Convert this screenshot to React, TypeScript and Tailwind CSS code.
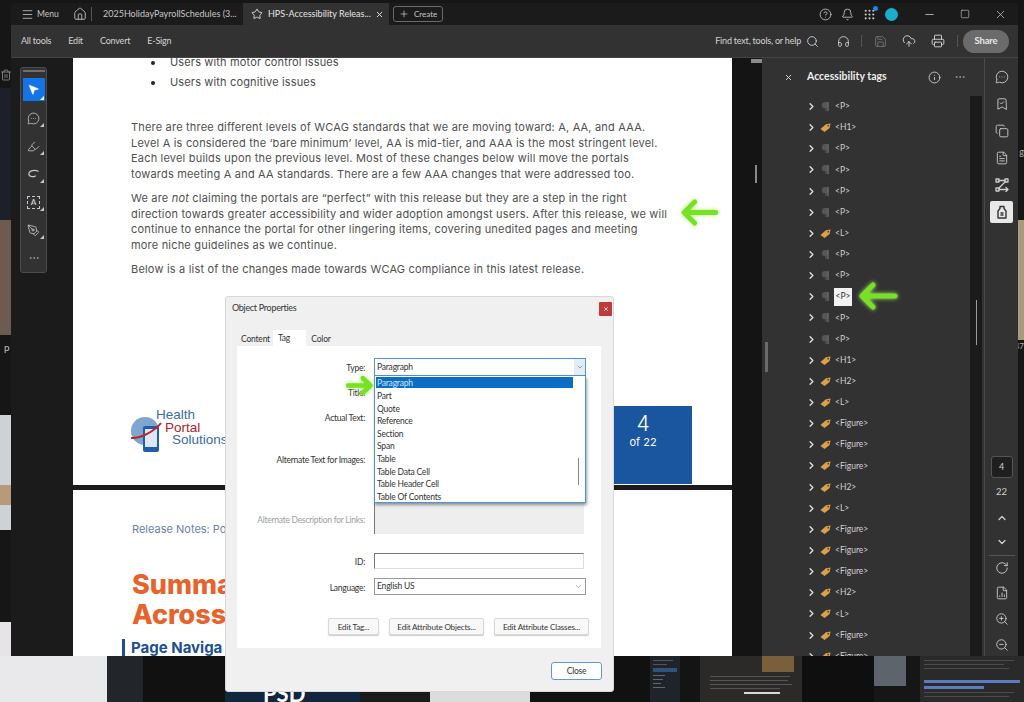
import {
  Bell,
  BookmarkCheck,
  ChevronDown,
  ChevronRight,
  ChevronUp,
  CircleHelp,
  CloudUpload,
  Copy,
  Ellipsis,
  FileChartColumn,
  FileText,
  Grip,
  Headphones,
  Highlighter,
  Home,
  Info,
  Menu,
  MessageCircleMore,
  Minus,
  MousePointer2,
  PenTool,
  Plus,
  Printer,
  RotateCw,
  Save,
  Search,
  Square,
  Star,
  Trash2,
  X,
  ZoomIn,
  ZoomOut,
} from "lucide-react";

const tags = [
  "P", "H1", "P", "P", "P", "P", "L", "P", "P", "P", "P", "P", "H1", "H2",
  "L", "Figure", "Figure", "Figure", "H2", "L", "Figure", "Figure", "Figure",
  "H2", "L", "Figure", "Figure",
];

const dropdownItems = [
  "Part", "Quote", "Reference", "Section", "Span", "Table", "Table Data Cell",
  "Table Header Cell", "Table Of Contents",
];

function GreenArrow({ className, flip, thick }: { className: string; flip?: boolean; thick?: boolean }) {
  return (
    <svg
      viewBox="0 0 40 28"
      fill="none"
      stroke="#78e025"
      strokeWidth={thick ? 7 : 5}
      strokeLinecap="round"
      strokeLinejoin="round"
      className={`drop-shadow-[0_0_2px_#a6ee6a] ${className}`}
      style={flip ? { transform: "scaleX(-1)" } : undefined}
    >
      <path d="M37 14H5M15 3 4 14l11 11" />
    </svg>
  );
}

function TagIcon() {
  return (
    <svg viewBox="0 0 12 12" className="h-[11px] w-[11px] shrink-0">
      <path d="M.5 7.500 6.500 2.500 11.500 1.500 10.500 6.500 5 11z" fill="#d9a24a" />
      <circle cx="9" cy="4" r="1" fill="#5b4520" />
    </svg>
  );
}

function ParaIcon() {
  return (
    <svg viewBox="0 0 12 12" className="h-[11px] w-[11px] shrink-0">
      <circle cx="5.500" cy="4.500" r="3.500" fill="#555" />
      <rect x="8" y="1" width="1.500" height="10" fill="#6a6a6a" />
      <rect x="6" y="1" width="1.200" height="10" fill="#5c5c5c" />
    </svg>
  );
}

function ToolBtn({ children }: { children: React.ReactNode }) {
  return (
    <div className="relative flex h-[28px] w-[22px] items-center justify-center text-[#c8c8c8]">
      {children}
      <span className="absolute right-[1px] bottom-[5px] h-0 w-0 border-b-[4px] border-l-[4px] border-b-[#c8c8c8] border-l-transparent" />
    </div>
  );
}

function FormRow({ label, muted, height, children }: { label: string; muted?: boolean; height: string; children?: React.ReactNode }) {
  return (
    <div className={`flex ${height}`}>
      <div className={`w-[128px] shrink-0 pt-[4px] text-right text-[8.500px] leading-[12px] tracking-[-0.27px] whitespace-nowrap ${muted ? "text-[#a0a0a0]" : "text-[#333]"}`}>{label}</div>
      <div className="ml-[9px] flex-1">{children}</div>
    </div>
  );
}

function DialogBtn({ label, width }: { label: string; width: string }) {
  return (
    <button className={`h-[17px] ${width} rounded-[2px] border border-[#d8d8d8] bg-[#f8f8f8] text-[8px] tracking-[-0.15px] text-[#333] shadow-[0_1px_1px_#ccc]`}>
      {label}
    </button>
  );
}

export default function App() {
  return (
    <div className="relative h-[702px] w-[1024px] overflow-hidden bg-[#161616] font-['Lato',sans-serif]">
      {/* desktop behind the window */}
      <Trash2 className="absolute top-[68px] left-0 h-[14px] w-[12px] text-[#9a9a9a]" strokeWidth={1.5} />
      <div className="absolute top-[88px] left-0 h-[132px] w-[11px] bg-[#1d2029]" />
      <div className="absolute top-[220px] left-0 h-[115px] w-[11px] bg-[#6d5a50]" />
      <span className="absolute top-[340px] left-[4px] text-[10px] text-[#c0c0c0]">p</span>
      <div className="absolute top-[415px] left-0 h-[115px] w-[11px] bg-[#cdd2d6]" />
      <div className="absolute top-[485px] left-0 h-[20px] w-[11px] bg-[#b89a7a]" />
      <div className="absolute top-[622px] left-0 h-[80px] w-[11px] bg-[#e6e4e6]" />
      <div className="absolute top-[220px] right-0 h-[120px] w-[6px] bg-[#a89a7c]" />
      <span className="absolute top-[145px] right-0 text-[9px] text-[#b0b0b0]">g</span>
      <span className="absolute top-[340px] right-0 text-[8px] text-[#b0b0b0]">47</span>
      <div className="absolute top-[656px] left-0 flex h-[46px] w-[1024px] overflow-hidden">
        <div className="w-[107px] bg-[#e9e8ea]" />
        <div className="w-[36px] bg-[#22262b]" />
        <div className="w-[82px] bg-[#111]" />
        <div className="h-full w-[135px] overflow-hidden bg-[#12263f] pt-[27px] pl-[38px] text-[22px] leading-[22px] font-bold text-white">PSD</div>
        <div className="w-[70px] bg-[#1a1a1a]" />
        <div className="w-[100px] bg-[#dcdcdc]" />
        <div className="w-[120px] bg-[#111]" />
        <div className="flex w-[30px] flex-col gap-[3px] bg-[#1f242a] px-[3px] pt-[4px] blur-[0.6px]">
          <div className="h-[1px] w-[20px] bg-[#555]" />
          <div className="h-[1px] w-[14px] bg-[#555]" />
          <div className="h-[4px] w-[24px] bg-[#34507c]" />
          <div className="h-[1px] w-[12px] bg-[#666]" />
          <div className="h-[1px] w-[10px] bg-[#666]" />
          <div className="h-[1px] w-[8px] bg-[#666]" />
          <div className="h-[1px] w-[12px] bg-[#666]" />
        </div>
        <div className="w-[20px] bg-[#141414]" />
        <div className="relative flex w-[102px] flex-col gap-[3px] bg-[#2b2a29] px-[10px] pt-[20px] blur-[0.6px]">
          <div className="absolute top-0 right-[8px] h-[16px] w-[32px] bg-[#7a5f3c]" />
          <div className="h-[1px] w-[80px] bg-[#555]" />
          <div className="h-[1px] w-[78px] bg-[#555]" />
          <div className="h-[1px] w-[82px] bg-[#555]" />
          <div className="h-[1px] w-[70px] bg-[#555]" />
          <div className="ml-[34px] h-[2px] w-[36px] bg-[#d8d8d8]" />
        </div>
        <div className="w-[72px] bg-[#0f0f0f]" />
        <div className="w-[46px] bg-[#161616]">
          <div className="h-[30px] w-[32px] bg-[#5d646c]" />
        </div>
        <div className="flex w-[104px] flex-col gap-[3px] bg-[#2a2a2b] pt-[4px] pl-[4px] blur-[0.6px]">
          <div className="h-[1px] w-[90px] bg-[#4c4c4c]" />
          <div className="h-[1px] w-[80px] bg-[#4c4c4c]" />
          <div className="h-[1px] w-[85px] bg-[#4c4c4c]" />
          <div className="mt-[8px] h-[3px] w-[96px] bg-[#5d7cc0]" />
          <div className="h-[3px] w-[60px] bg-[#5d7cc0]" />
          <div className="h-[1px] w-[90px] bg-[#4c4c4c]" />
          <div className="h-[1px] w-[85px] bg-[#4c4c4c]" />
        </div>
      </div>

      {/* acrobat window */}
      <div className="absolute top-[3px] left-[11px] flex h-[653px] w-[1007px] flex-col overflow-hidden rounded-t-[4px] bg-[#1b1b1b]">
        <div className="flex h-[22px] shrink-0 items-center pr-[11px] text-[#c6c6c6]">
          <Menu className="ml-[10px] h-[13px] w-[13px]" strokeWidth={1.5} />
          <span className="ml-[3px] w-[26px] text-[8.500px]">Menu</span>
          <Home className="ml-[10px] h-[14px] w-[14px]" strokeWidth={1.5} />
          <div className="ml-[4px] h-[14px] w-px bg-[#555]" />
          <div className="w-[151px] pl-[11px] text-[9px] whitespace-nowrap">2025HolidayPayrollSchedules (3...</div>
          <div className="flex h-full w-[146px] items-center bg-[#323232] pl-[8px] text-[#e4e4e4]">
            <Star className="h-[12px] w-[12px]" strokeWidth={1.8} />
            <span className="ml-[5px] w-[100px] text-[9px] whitespace-nowrap">HPS-Accessibility Releas...</span>
            <X className="ml-[7px] h-[9px] w-[9px]" strokeWidth={2.5} />
          </div>
          <div className="ml-[4px] flex h-[16px] w-[50px] items-center rounded-[3px] border border-[#6a6a6a] pl-[5px]">
            <Plus className="h-[10px] w-[10px]" strokeWidth={1.8} />
            <span className="ml-[5px] text-[8px]">Create</span>
          </div>
          <div className="ml-auto flex items-center gap-[9px]">
            <CircleHelp className="h-[13px] w-[13px]" strokeWidth={1.6} />
            <Bell className="h-[13px] w-[13px]" strokeWidth={1.6} />
            <div className="relative">
              <Grip className="h-[13px] w-[13px]" strokeWidth={2} />
              <span className="absolute -top-[2px] -right-[2px] h-[5px] w-[5px] rounded-full bg-[#2680eb]" />
            </div>
            <div className="h-[13px] w-[13px] rounded-full bg-[#19aecb]" />
          </div>
          <Minus className="ml-[25px] h-[13px] w-[13px]" strokeWidth={1.5} />
          <Square className="ml-[24px] h-[10px] w-[10px]" strokeWidth={1.5} />
          <X className="ml-[24px] h-[13px] w-[13px]" strokeWidth={1.4} />
        </div>

        <div className="flex h-[33px] shrink-0 items-center border-b border-[#444] bg-[#323232] pr-[9px] text-[9px] tracking-[-0.2px] text-[#d4d4d4]">
          <div className="ml-[10px] flex gap-[17px] whitespace-nowrap">
            <span>All tools</span>
            <span>Edit</span>
            <span>Convert</span>
            <span>E-Sign</span>
          </div>
          <span className="ml-auto whitespace-nowrap">Find text, tools, or help</span>
          <Search className="ml-[5px] h-[13px] w-[13px]" strokeWidth={1.6} />
          <Headphones className="ml-[18px] h-[13px] w-[13px]" strokeWidth={1.6} />
          <div className="ml-[11px] h-[12px] w-px bg-[#555]" />
          <Save className="ml-[12px] h-[13px] w-[13px] text-[#777]" strokeWidth={1.6} />
          <CloudUpload className="ml-[15px] h-[14px] w-[14px]" strokeWidth={1.6} />
          <Printer className="ml-[15px] h-[14px] w-[14px]" strokeWidth={1.6} />
          <div className="ml-[12px] h-[12px] w-px bg-[#555]" />
          <div className="ml-[5px] flex h-[23px] w-[46px] items-center justify-center rounded-full bg-[#6b6b6b] text-[9.500px] font-bold text-[#e8e8e8]">Share</div>
        </div>

        <div className="flex min-h-0 flex-1">
          <div className="w-[62px] shrink-0 pt-[9px] pl-[9px]">
            <div className="flex h-[206px] w-[27px] flex-col items-center rounded-[3px] border border-[#4c4c4c] bg-[#323232] pt-[2px]">
              <div className="h-[2px] w-[22px] bg-[#6e6e6e]" />
              <div className="relative mt-[6px] mb-[3px] flex h-[23px] w-[22px] items-center justify-center bg-[#1473e6]">
                <MousePointer2 className="h-[13px] w-[13px] fill-white text-white" strokeWidth={1} />
                <span className="absolute right-[1px] bottom-[1px] h-0 w-0 border-b-[4px] border-l-[4px] border-b-white border-l-transparent" />
              </div>
              <ToolBtn><MessageCircleMore className="h-[13px] w-[13px]" strokeWidth={1.5} /></ToolBtn>
              <ToolBtn><Highlighter className="h-[13px] w-[13px]" strokeWidth={1.5} /></ToolBtn>
              <ToolBtn>
                <svg viewBox="0 0 14 14" fill="none" stroke="currentColor" strokeWidth="1.3" strokeLinecap="round" className="h-[13px] w-[13px]">
                  <path d="M12 3.500C9 1.500 2 2.500 2 6.500c0 3 5 3.500 7 2" />
                </svg>
              </ToolBtn>
              <ToolBtn>
                <div className="flex h-[13px] w-[13px] items-center justify-center border border-dashed border-[#c8c8c8] text-[8px] leading-none font-bold">A</div>
              </ToolBtn>
              <ToolBtn><PenTool className="h-[13px] w-[13px]" strokeWidth={1.5} /></ToolBtn>
              <Ellipsis className="mt-[8px] h-[12px] w-[12px] text-[#a8a8a8]" strokeWidth={1.5} />
            </div>
          </div>

          {/* document */}
          <div className="flex w-[659px] shrink-0 flex-col overflow-hidden bg-white font-['Inter',sans-serif]">
            <div className="flex h-[427px] shrink-0 flex-col">
              <ul className="ml-[78px] flex flex-col gap-[5px] text-[11px] leading-[15px] tracking-[0.15px] text-[#4a4a4a]">
                <li className="-mt-[3px] flex items-center">
                  <span className="h-[4px] w-[4px] rounded-full bg-[#222]" />
                  <span className="ml-[15px]">Users with motor control issues</span>
                </li>
                <li className="flex items-center">
                  <span className="h-[4px] w-[4px] rounded-full bg-[#222]" />
                  <span className="ml-[15px]">Users with cognitive issues</span>
                </li>
              </ul>
              <div className="mt-[30px] ml-[58px] flex flex-col gap-[8px] text-[11px] leading-[15.700px] tracking-[0.19px] whitespace-nowrap text-[#505050]">
                <p>
                  There are three different levels of WCAG standards that we are moving toward: A, AA, and AAA.<br />
                  Level A is considered the ‘bare minimum’ level, AA is mid-tier, and AAA is the most stringent level.<br />
                  Each level builds upon the previous level. Most of these changes below will move the portals<br />
                  towards meeting A and AA standards. There are a few AAA changes that were addressed too.
                </p>
                <p>
                  We are <em>not</em> claiming the portals are “perfect” with this release but they are a step in the right<br />
                  direction towards greater accessibility and wider adoption amongst users. After this release, we will<br />
                  continue to enhance the portal for other lingering items, covering unedited pages and meeting<br />
                  more niche guidelines as we continue.
                </p>
                <p>Below is a list of the changes made towards WCAG compliance in this latest release.</p>
              </div>
              <div className="mt-auto flex items-end justify-between pr-[40px] pl-[57px]">
                <div className="mb-[32px] flex items-start">
                  <svg viewBox="0 0 32 36" className="mt-[8px] h-[36px] w-[32px] shrink-0">
                    <circle cx="15" cy="14" r="14" fill="#7ea6cf" />
                    <rect x="13" y="9" width="16" height="26" rx="2" fill="#1f5ea8" />
                    <rect x="15" y="12" width="12" height="18" fill="#dfe8f2" />
                    <path d="M1 21C10 22 25 14 31 6" stroke="#c0202a" strokeWidth="2" fill="none" />
                  </svg>
                  <div className="-ml-[6px] w-[70px] font-['Liberation_Sans',sans-serif] text-[13.500px] leading-[12.500px] whitespace-nowrap">
                    <div className="text-[#3a6ea5]">Health</div>
                    <div className="pl-[9px] text-[#b3202a]">Portal</div>
                    <div className="pl-[16px] text-[#3a6ea5]">Solutions</div>
                  </div>
                </div>
                <div className="mb-px flex h-[78px] w-[98px] flex-col items-center bg-[#1a56a0] pt-[6px] text-white">
                  <span className="text-[21px] leading-[24px] font-light">4</span>
                  <span className="text-[11px] leading-[13px]">of 22</span>
                </div>
              </div>
            </div>
            <div className="h-[5px] shrink-0 bg-[#1b1b1b]" />
            <div className="flex min-h-0 flex-1 flex-col pl-[59px]">
              <span className="mt-[32px] text-[11px] leading-[14px] text-[#6d7fa8]">Release Notes: Po</span>
              <h1 className="mt-[34px] text-[27px] leading-[30px] font-extrabold text-[#e8622c]">
                Summa<br />Across
              </h1>
              <div className="mt-[1px] -ml-[2px] h-[2px] w-[546px] bg-[#2a62aa]" />
              <div className="mt-[8px] -ml-[10px] flex h-[18px] items-center border-l-[3px] border-[#1d4f91] pl-[6px] text-[15px] font-bold text-[#1d4f91]">Page Naviga</div>
            </div>
          </div>

          <div className="relative w-[30px] shrink-0 bg-[#141414]">
            <div className="absolute top-px right-0 h-[4px] w-[11px] bg-[#8a8a8a]" />
            <div className="absolute top-[107px] right-[5px] h-[18px] w-[2px] bg-[#8a8a8a]" />
          </div>

          {/* tags panel */}
          <div className="relative flex w-[222px] shrink-0 flex-col bg-[#323232] text-[#d6d6d6]">
            <div className="absolute top-[284px] left-[3px] h-[30px] w-[3px] bg-[#6a6a6a]" />
            <div className="flex h-[38px] shrink-0 items-center">
              <X className="ml-[22px] h-[9px] w-[9px]" strokeWidth={2.5} />
              <span className="ml-[14px] w-[80px] text-[10.500px] font-bold whitespace-nowrap text-[#ececec]">Accessibility tags</span>
              <Info className="ml-[41px] h-[13px] w-[13px]" strokeWidth={1.6} />
              <Ellipsis className="ml-[13px] h-[12px] w-[12px] text-[#a8a8a8]" strokeWidth={1.5} />
            </div>
            <div className="flex min-h-0 flex-1">
              <div className="w-[208px] shrink-0 overflow-hidden pl-[44px]">
                {tags.map((tag, i) => (
                  <div key={i} className="flex h-[21.150px] items-center">
                    <ChevronRight className="h-[11px] w-[11px] shrink-0 text-[#dcdcdc]" strokeWidth={3} />
                    <div className="ml-[3px]">{tag === "P" ? <ParaIcon /> : <TagIcon />}</div>
                    {i === 9 ? (
                      <span className="ml-[3px] flex h-[18px] w-[18px] items-center justify-center bg-[#f2f2f2] text-[8.500px] text-[#333]">&lt;P&gt;</span>
                    ) : (
                      <span className="ml-[4px] text-[8.500px] text-[#d0d0d0]">&lt;{tag}&gt;</span>
                    )}
                  </div>
                ))}
              </div>
              <div className="relative w-[12px] shrink-0 bg-[#1b1b1b]">
                <div className="absolute top-[204px] left-[6px] h-[45px] w-px bg-[#9a9a9a]" />
              </div>
            </div>
            <GreenArrow className="absolute top-[224px] left-[96px] h-[28px] w-[40px]" />
          </div>

          {/* right rail */}
          <div className="flex flex-1 flex-col items-center border-l border-[#4a4a4a] bg-[#323232] text-[#d0d0d0]">
            <div className="mt-[12px] flex flex-col items-center gap-[13px]">
              <MessageCircleMore className="h-[14px] w-[14px]" strokeWidth={1.5} />
              <BookmarkCheck className="h-[14px] w-[14px]" strokeWidth={1.5} />
              <Copy className="h-[14px] w-[14px]" strokeWidth={1.5} />
              <FileText className="h-[14px] w-[14px]" strokeWidth={1.5} />
              <svg viewBox="0 0 14 14" fill="none" stroke="currentColor" strokeWidth="1.3" strokeLinecap="round" strokeLinejoin="round" className="h-[14px] w-[14px]">
                <rect x="1" y="1" width="3" height="3" />
                <rect x="10" y="1" width="3" height="3" />
                <rect x="1" y="10" width="3" height="3" />
                <path d="M4 2.500h6M10 4 4 10M4 11.500h9M11 9.500l2 2-2 2" />
              </svg>
            </div>
            <div className="mt-[9px] flex h-[22px] w-[23px] items-center justify-center rounded-[2px] bg-[#e8e8e8] text-[#333]">
              <svg viewBox="0 0 14 14" fill="none" stroke="currentColor" strokeWidth="1.4" strokeLinejoin="round" className="h-[14px] w-[14px]">
                <path d="M5 1.500h4v2l2 2.500v7H3V6l2-2.500z" />
                <path d="M5.500 8h3M5.500 10h3" />
              </svg>
            </div>
            <div className="mt-[233px] flex h-[22px] w-[22px] items-center justify-center rounded-[3px] border border-[#555] bg-[#1f1f1f] text-[9px]">4</div>
            <span className="mt-[7px] text-[9.500px]">22</span>
            <ChevronUp className="mt-[13px] h-[12px] w-[12px]" strokeWidth={2.5} />
            <ChevronDown className="mt-[12px] h-[12px] w-[12px]" strokeWidth={2.5} />
            <div className="mt-[7px] h-px w-[26px] bg-[#555]" />
            <RotateCw className="mt-[5px] h-[14px] w-[14px]" strokeWidth={1.5} />
            <FileChartColumn className="mt-[11px] h-[14px] w-[14px]" strokeWidth={1.5} />
            <ZoomIn className="mt-[12px] h-[14px] w-[14px]" strokeWidth={1.5} />
            <ZoomOut className="mt-[12px] h-[14px] w-[14px]" strokeWidth={1.5} />
          </div>
        </div>
      </div>

      <GreenArrow className="absolute top-[199px] left-[680px] h-[27px] w-[39px]" />

      {/* dialog */}
      <div className="absolute top-[296px] left-[225px] flex h-[396px] w-[389px] flex-col rounded-[3px] border border-[#d8d8d8] bg-[#f0f0f0] tracking-[-0.2px] text-[#333]">
        <div className="flex h-[34px] shrink-0 items-start justify-between pt-[4px] pr-[1px] pl-[6px]">
          <span className="text-[9px] tracking-[-0.3px]">Object Properties</span>
          <div className="mt-[1px] flex h-[14px] w-[13px] items-center justify-center rounded-[1px] bg-[#c13a3a] text-white">
            <X className="h-[6px] w-[6px]" strokeWidth={3} />
          </div>
        </div>
        <div className="ml-[12px] flex h-[15px] shrink-0 items-end text-[8.500px]">
          <span className="flex h-[14px] w-[35px] items-center justify-center">Content</span>
          <span className="flex h-[16px] w-[33px] items-center justify-start bg-white pl-[5px]">Tag</span>
          <span className="flex h-[14px] w-[30px] items-center justify-center">Color</span>
        </div>
        <div className="relative mr-[12px] ml-[11px] flex h-[302px] shrink-0 flex-col bg-white pt-[12px]">
          <FormRow label="Type:" height="h-[25px]">
            <div className="flex h-[18px] w-[212px] items-center border border-[#4f94d4] pl-[2px] text-[8.500px]">
              Paragraph
              <div className="ml-auto flex h-full w-[11px] items-center justify-center bg-[#e2edf7] text-[#555]">
                <ChevronDown className="h-[8px] w-[8px]" strokeWidth={1.5} />
              </div>
            </div>
          </FormRow>
          <FormRow label="Title:" height="h-[25px]" />
          <FormRow label="Actual Text:" height="h-[42px]" />
          <FormRow label="Alternate Text for Images:" height="h-[60px]" />
          <FormRow label="Alternate Description for Links:" muted height="h-[42px]">
            <div className="-mt-[16px] h-[40px] w-[210px] border-l border-[#777] bg-[#eeeeee]" />
          </FormRow>
          <FormRow label="ID:" height="h-[26px]">
            <div className="mt-[1px] h-[16px] w-[210px] border border-[#ddd] border-t-[#777] border-l-[#777]" />
          </FormRow>
          <FormRow label="Language:" height="h-[38px]">
            <div className="flex h-[17px] w-[212px] items-center justify-between border border-[#999] pr-[2px] pl-[2px] text-[8.500px]">
              English US
              <ChevronDown className="h-[9px] w-[9px] text-[#777]" strokeWidth={1.5} />
            </div>
          </FormRow>
          <div className="mt-[2px] flex gap-[10px] pl-[91px]">
            <DialogBtn label="Edit Tag..." width="w-[51px]" />
            <DialogBtn label="Edit Attribute Objects..." width="w-[95px]" />
            <DialogBtn label="Edit Attribute Classes..." width="w-[95px]" />
          </div>

          <div className="absolute top-[30px] left-[137px] h-[127px] w-[212px] border border-t-0 border-[#4f94d4] bg-white px-px pt-px text-[8.500px] shadow-[1px_2px_3px_rgba(0,0,0,0.4)]">
            <div className="mb-px h-[11px] w-[197px] bg-[#0a6fc4] pl-[1px] leading-[12px] text-[#cfe4f7]">Paragraph</div>
            {dropdownItems.map((item) => (
              <div key={item} className="h-[12.600px] pl-[1px] leading-[14px]">{item}</div>
            ))}
            <div className="absolute top-[82px] left-[203px] h-[27px] w-px bg-[#888]" />
          </div>
        </div>
        <div className="flex flex-1 items-start justify-end pt-[14px] pr-[11px]">
          <button className="h-[18px] w-[51px] rounded-[3px] border border-[#5c9bd1] bg-white text-[8.500px]">Close</button>
        </div>
      </div>

      <GreenArrow flip thick className="absolute top-[376px] left-[346px] h-[19px] w-[27px]" />
    </div>
  );
}
